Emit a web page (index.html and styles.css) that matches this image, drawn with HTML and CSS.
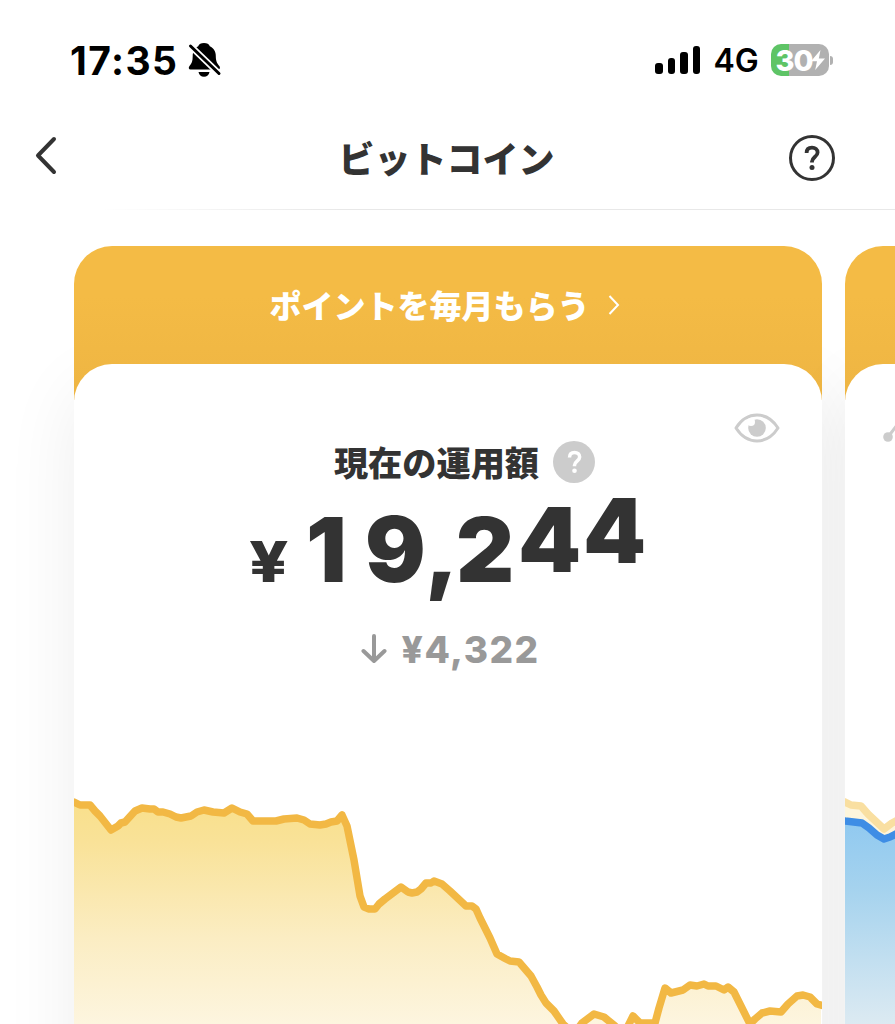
FILE: index.html
```
<!DOCTYPE html>
<html lang="ja">
<head>
  <meta charset="UTF-8">
  <title>ビットコイン</title>
  <link rel="stylesheet" href="styles.css">
</head>
<body>

<div class="status">
  <span class="time">17:35</span>
  <svg class="bell" width="34" height="36" viewBox="188 42 34 36">
    <path d="M204 43c3 0 5 1 5.800 3.200 4 1.800 6 5.500 6 10 0 5 1.500 7.500 3.700 10 .8 1 .5 3.200-1 3.200H190.500c-1.800 0-2.300-2-1-3.500 2.300-2.600 3.200-5 3.200-9.700 0-4.500 2-8.200 5.500-10C199 44 201 43 204 43zM198.500 72h11c-.5 3-2.600 4.700-5.500 4.700s-5-1.700-5.500-4.700z" fill="#000"/>
    <path d="M190.500 46l28.500 27.500" stroke="#fff" stroke-width="6.500"/>
    <path d="M190.500 46l28.500 27.500" stroke="#000" stroke-width="3" stroke-linecap="round"/>
  </svg>
  <div class="signal"><i class="s1"></i><i class="s2"></i><i class="s3"></i><i class="s4"></i></div>
  <span class="net">4G</span>
  <div class="battery">
    <span>30</span>
    <svg width="16" height="22" viewBox="0 0 16 22"><path d="M10.500 1L1 12.200h6L5.200 21 15 9.400H8.800z" fill="#fff"/></svg>
  </div>
  <i class="tip"></i>
</div>

<div class="header">
  <svg width="22" height="40" viewBox="0 0 22 40"><path d="M19 3L3 19.500 19 36" fill="none" stroke="#333" stroke-width="4" stroke-linecap="round" stroke-linejoin="round"/></svg>
  <h1>ビットコイン</h1>
  <div class="help">
    <svg width="16" height="26" viewBox="0 0 16 26"><path d="M2.600 8C2.600 4.500 4.800 2.700 8 2.700s5.600 1.900 5.600 4.800c0 4.200-5.600 4.900-5.600 9v1" fill="none" stroke="#333" stroke-width="3.800"/><circle cx="8" cy="22.500" r="2.500" fill="#333"/></svg>
  </div>
</div>
<div class="line"></div>

<div class="cards">
  <div class="card">
    <div class="banner">
      <span>ポイントを毎月もらう</span>
      <svg width="12" height="20" viewBox="0 0 12 20"><path d="M1.500 1L10 10l-8.500 9" fill="none" stroke="#fff" stroke-width="2"/></svg>
    </div>
    <div class="panel">
      <svg class="eye" width="46" height="30" viewBox="0 0 46 30">
        <path d="M2 15C13-2.200 33-2.200 44 15 33 32.200 13 32.200 2 15z" fill="none" stroke="#ccc" stroke-width="3" stroke-linejoin="round"/>
        <circle cx="23" cy="15" r="8.800" fill="#ccc"/><circle cx="17" cy="9" r="4" fill="#fff"/>
      </svg>
      <div class="label">
        <span>現在の運用額</span>
        <div class="hint">
          <svg width="15" height="24" viewBox="0 0 16 26"><path d="M2.600 8C2.600 4.500 4.800 2.700 8 2.700s5.600 1.900 5.600 4.800c0 4.200-5.600 4.900-5.600 9v1" fill="none" stroke="#fff" stroke-width="3.800"/><circle cx="8" cy="22.500" r="2.500" fill="#fff"/></svg>
        </div>
      </div>
      <div class="amount"><span class="yen">¥</span><span class="d1">1</span><span class="d2">9</span><span class="d3">,</span><span class="d4">2</span><span class="d5">4</span><span class="d6">4</span></div>
      <div class="diff">
        <svg width="26" height="30" viewBox="0 0 26 30"><path d="M13 2v25M2.500 17L13 27l10.500-10" fill="none" stroke="#999" stroke-width="4" stroke-linecap="round" stroke-linejoin="round"/></svg>
        <span>¥4,322</span>
      </div>
      <svg class="chart" width="748" height="244" viewBox="74 780 748 244">
        <defs>
          <linearGradient id="gold" gradientUnits="userSpaceOnUse" x1="0" y1="810" x2="0" y2="1024">
            <stop offset="0" stop-color="#f9e08e"/><stop offset=".15" stop-color="#f9e298"/><stop offset=".6" stop-color="#fbedc3"/><stop offset="1" stop-color="#fdf5df"/>
          </linearGradient>
        </defs>
        <path fill="url(#gold)" d="M70 802L74 802 80 805 90 805 95 811 111 830 118 826 125 822 135 811 142 808 154 809 158 812 170 814 181 818 191 816 197 812 204 810 213 812 224 812 232 808 240 812 247 814 253 821 270 821 284 819 297 818 308 822 320 825 331 822 337 818 342 815 347 826 354 860 360 896 364 907 374 909 385 899 393 893 401 887 408 892 415 893 421 889 426 883 434 881 442 884 450 891 466 906 474 907 478 914 486 932 497 954 506 959 519 962 531 976 537 987 545 1003 553 1011 563 1026V1030H580L594 1014 604 1017 615 1028H627L633 1016 640 1023H655L665 988 671 993 683 989 690 985 705 984 716 986 724 990 730 987 750 1027 763 1013 781 1011 795 998 803 995 810 997 821 1005V1030H70z"/>
        <path class="stroke" d="M70 802L74 802 80 805 90 805 95 811 100 816 111 830 118 826 121 823 125 822 135 811 142 808 150 809 154 809 158 812 163 812 170 814 176 817 181 818 191 816 197 812 204 810 213 812 224 813 232 808 240 812 247 814 253 821 262 821 270 821 276 821 284 819 297 818 304 820 310 824 320 825 326 824 331 822 337 821 342 815 347 826 354 860 360 896 364 907 369 909 375 909 379 904 385 899 393 893 401 887 408 892 412 893 417 892 421 889 426 883 431 883 434 881 442 884 450 891 466 906 472 906 476 909 480 918 490 938 497 954 506 959 510 961 519 962 525 969 531 976 537 987 541 995 546 1003 554 1011 563 1024 574 1034 582 1023 594 1014 604 1017 615 1026 624 1034 633 1016 640 1023 655 1023 659 1008 665 988 671 993 683 990 690 985 697 986 704 984 708 986 716 986 724 990 728 987 734 992 750 1024 755 1019 762 1013 770 1011 781 1012 788 1004 797 996 803 995 810 997 817 1004 824 1006"/>
      </svg>
    </div>
  </div>

  <div class="card">
    <div class="banner"></div>
    <div class="panel">
      <svg class="dots" width="30" height="40" viewBox="0 0 30 40"><path d="M5 27L14 15l10 7" fill="none" stroke="#ccc" stroke-width="3"/><circle cx="5" cy="27" r="4.800" fill="#ccc"/></svg>
      <svg class="chart" width="748" height="244" viewBox="845 780 748 244">
        <defs>
          <linearGradient id="blue" gradientUnits="userSpaceOnUse" x1="0" y1="820" x2="0" y2="1024">
            <stop offset="0" stop-color="#90c9f0"/><stop offset=".35" stop-color="#a6d3ee"/><stop offset="1" stop-color="#dceaf2"/>
          </linearGradient>
        </defs>
        <path fill="#fdf5dc" d="M840 802L851 805 861 806 884 829 900 820V850H840z"/>
        <path class="stroke pale" d="M840 801L845 802 851 805 861 806 868 814 884 829 892 823 900 819"/>
        <path fill="url(#blue)" d="M840 820L863 824 884 839 900 832V1030H840z"/>
        <path class="stroke sea" d="M840 820L845 821 862 823 869 828 877 835 884 839 890 837 900 832"/>
      </svg>
    </div>
  </div>
</div>

</body>
</html>
```

FILE: styles.css
```
* { box-sizing: border-box; }
body { margin: 0; height: 1024px; overflow: hidden; background: #fff; color: #333; font-family: Inter, "Noto Sans CJK JP", sans-serif; }
svg { display: block; flex: none; }

.status { display: flex; align-items: center; height: 120px; padding-left: 70px; color: #000; }
.time { width: 118px; font-size: 39px; font-weight: 700; letter-spacing: 1.400px; }
.bell { margin-right: 433px; }
.signal { display: flex; align-items: flex-end; gap: 5px; height: 28px; margin-right: 13px; }
.signal i { width: 7.600px; border-radius: 3px; background: #000; }
.s1 { height: 11px; }
.s2 { height: 16px; }
.s3 { height: 22px; }
.s4 { height: 28px; }
.net { width: 58px; font-size: 32px; font-weight: 600; }
.battery { display: flex; align-items: center; width: 58px; height: 32px; padding-left: 4px; border-radius: 10px; color: #fff; font-size: 29px; font-weight: 800; background: linear-gradient(to right, #5ec466 18px, #b1b1b1 18px); }
.battery span { width: 35px; letter-spacing: -1px; }
.tip { width: 3px; height: 9px; margin-left: 1px; border-radius: 0 4px 4px 0; background: #b1b1b1; }

.header { display: grid; grid-template-columns: 60px 1fr 60px; align-items: center; height: 89px; padding: 0 46px 17px 35px; }
.header h1 { margin: 7px 0 0; padding-left: 9px; font-size: 36px; font-weight: 900; line-height: 40px; text-align: center; }
.help { display: flex; align-items: center; justify-content: center; width: 46px; height: 46px; margin-top: 4px; border: 3px solid #333; border-radius: 50%; }
.line { height: 1px; margin-bottom: 36px; background: linear-gradient(to right, #fff 100px, #e8e8e8 340px); }

.cards { display: flex; gap: 23px; height: 778px; padding-left: 74px; overflow: hidden; }
.card { flex: none; width: 748px; height: 778px; border-radius: 38px 38px 0 0; background: linear-gradient(#f4bb45 0, #f4bb45 50px, #eeb543 154px, #fff 154px); box-shadow: 0 140px 75px 0 rgba(0, 0, 0, .07); }
.banner { display: flex; align-items: center; justify-content: center; gap: 18px; height: 118px; padding-right: 7px; color: #fff; font-size: 32px; font-weight: 900; }
.banner span { margin-top: -3px; }
.panel { position: relative; height: 660px; padding-top: 77px; border-radius: 38px 38px 0 0; background: #fff; }
.eye { position: absolute; top: 49px; right: 42px; }
.dots { position: absolute; top: 46px; left: 38px; }
.label { display: flex; justify-content: center; align-items: center; gap: 14px; height: 42px; padding-left: 33px; font-size: 34.200px; font-weight: 900; }
.label span { margin-top: -3px; }
.hint { display: flex; align-items: center; justify-content: center; width: 42px; height: 42px; border-radius: 50%; background: #ccc; }

.amount { display: flex; align-items: baseline; height: 104px; padding-left: 175px; font-size: 90px; font-weight: 900; line-height: 134px; }
.amount span { flex: none; }
.yen { width: 57px; font-size: 56px; font-weight: 800; line-height: 1; transform: scaleX(1.220); transform-origin: left; }
.d1 { width: 59px; }
.d2 { width: 60px; }
.d3 { width: 31px; }
.d4 { width: 62px; }
.d5 { width: 65px; transform: translateY(-10px); }
.d6 { transform: translateY(-19px); }

.diff { display: flex; align-items: center; justify-content: center; gap: 15px; height: 50px; margin-top: 37px; padding-left: 4px; color: #999; font-size: 37px; font-weight: 800; letter-spacing: 1.400px; }
.chart { position: absolute; left: 0; bottom: 0; }
.stroke { fill: none; stroke: #f2b844; stroke-width: 7.500px; stroke-linejoin: round; }
.pale { stroke: #f9dfa1; }
.sea { stroke: #3e8de5; }
```
